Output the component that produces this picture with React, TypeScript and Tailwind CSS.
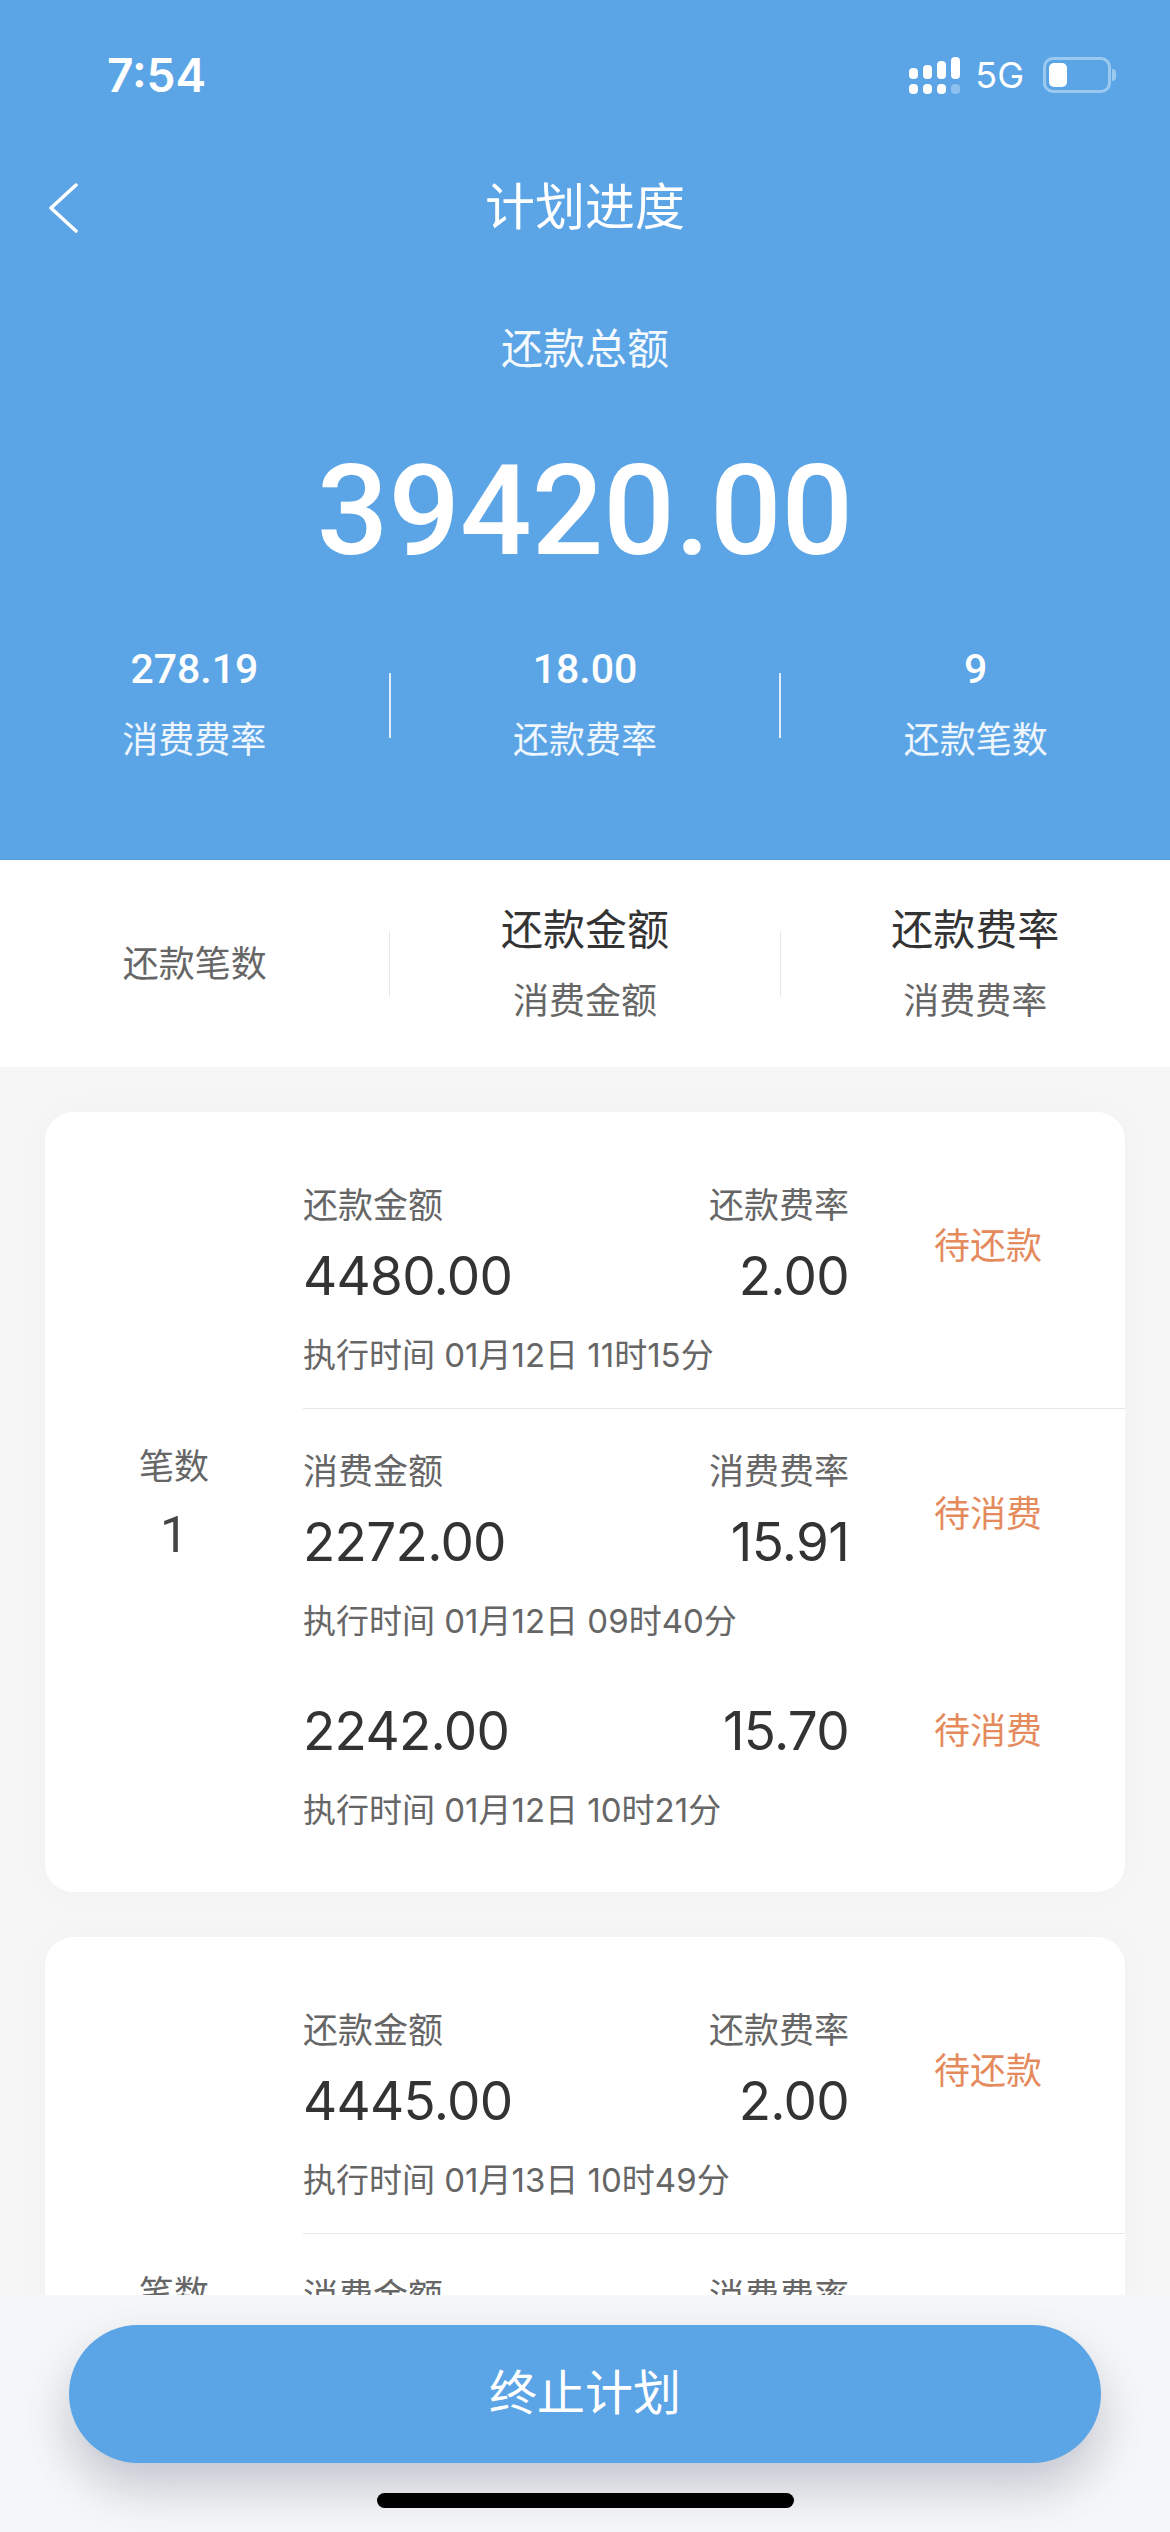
import React from 'react';

const fontStack = "font-['Roboto','Noto_Sans_CJK_SC',sans-serif]";

type Row = {
  label?: [string, string];
  amount: string;
  fee: string;
  status: string;
  time: string;
  divider?: boolean;
  pt: string;
  statusPt: string;
};

const cards: { no: string; rows: Row[]; h: string; noTop: string }[] = [
  {
    no: '1',
    h: 'h-[780px]',
    noTop: 'pt-[333px]',
    rows: [
      { label: ['还款金额', '还款费率'], amount: '4480.00', fee: '2.00', status: '待还款', time: '执行时间 01月12日 11时15分', divider: true, pt: 'pt-[72px]', statusPt: 'pt-[40px]' },
      { label: ['消费金额', '消费费率'], amount: '2272.00', fee: '15.91', status: '待消费', time: '执行时间 01月12日 09时40分', pt: 'pt-[41px]', statusPt: 'pt-[42px]' },
      { amount: '2242.00', fee: '15.70', status: '待消费', time: '执行时间 01月12日 10时21分', pt: 'pt-[53px]', statusPt: 'pt-[13px]' },
    ],
  },
  {
    no: '2',
    h: 'h-[780px]',
    noTop: 'pt-[335px]',
    rows: [
      { label: ['还款金额', '还款费率'], amount: '4445.00', fee: '2.00', status: '待还款', time: '执行时间 01月13日 10时49分', divider: true, pt: 'pt-[72px]', statusPt: 'pt-[40px]' },
      { label: ['消费金额', '消费费率'], amount: '2200.00', fee: '15.40', status: '待消费', time: '执行时间 01月13日 08时30分', pt: 'pt-[41px]', statusPt: 'pt-[42px]' },
    ],
  },
];

function StatusBar() {
  return (
    <div className="h-[150px] flex items-start justify-between pl-[107px] pr-[54px] pt-[50px]">
      <span className="text-[46px] leading-[50px] font-semibold text-white font-['Inter',sans-serif]">7:54</span>
      <div className="flex items-center gap-[14px] pt-[6px]">
        <svg width="52" height="37" viewBox="0 0 52 37" fill="#fff">
          <rect x="0" y="11" width="9" height="11" rx="4" />
          <rect x="14" y="8" width="9" height="14" rx="4" />
          <rect x="28" y="4" width="9" height="18" rx="4" />
          <rect x="42" y="0" width="9" height="22" rx="4" />
          <rect x="0" y="27" width="9" height="10" rx="4" />
          <rect x="14" y="27" width="9" height="10" rx="4" />
          <rect x="28" y="27" width="9" height="10" rx="4" />
          <rect x="42" y="27" width="9" height="10" rx="4" fillOpacity="0.3" />
        </svg>
        <span className="text-[36px] leading-[38px] text-white font-['Inter',sans-serif]">5G</span>
        <div className="flex items-center ml-[5px]">
          <div className="w-[68px] h-[36px] rounded-[10px] border-[3px] border-white/40 p-[3px]">
            <div className="w-[18px] h-full rounded-[5px] bg-white" />
          </div>
          <div className="w-[4px] h-[12px] rounded-r-full bg-white/40 ml-[1px]" />
        </div>
      </div>
    </div>
  );
}

function Stat({ value, label }: { value: string; label: string }) {
  return (
    <div className="flex-1 flex flex-col items-center">
      <span className="text-[41px] leading-[46px] font-medium text-white">{value}</span>
      <span className="mt-[26px] text-[36px] leading-[46px] text-white/90">{label}</span>
    </div>
  );
}

function PlanRow({ row }: { row: Row }) {
  return (
    <div className={row.pt}>
      <div className={row.divider ? 'flex border-b border-[#e8e8e8] pb-[31px]' : 'flex'}>
        <div className="w-[546px]">
          {row.label && (
            <div className="flex justify-between text-[35px] leading-[46px] text-[#666666] mb-[11px]">
              <span>{row.label[0]}</span>
              <span>{row.label[1]}</span>
            </div>
          )}
          <div className="flex justify-between text-[53px] leading-[70px] tracking-[-0.7px] text-[#333333] font-['Inter',sans-serif]">
            <span>{row.amount}</span>
            <span>{row.fee}</span>
          </div>
          <div className="mt-[22px] text-[33px] leading-[44px] text-[#666666] font-['Inter','Noto_Sans_CJK_SC',sans-serif]">{row.time}</div>
        </div>
        <div className={`${row.statusPt} pl-[85px] text-[36px] leading-[46px] text-[#e58a5c]`}>{row.status}</div>
      </div>
    </div>
  );
}

function CardList() {
  return cards.map((card) => (
    <div key={card.no} className={`${card.h} bg-white rounded-[28px] shadow-[0_0_40px_rgba(0,0,0,0.025)] flex`}>
      <div className={`w-[258px] flex flex-col items-center ${card.noTop}`}>
        <span className="text-[35px] leading-[46px] text-[#666666]">笔数</span>
        <span className="mt-[14px] text-[50px] leading-[60px] text-[#444444]">{card.no}</span>
      </div>
      <div className="flex-1">
        {card.rows.map((row) => (
          <PlanRow key={row.amount} row={row} />
        ))}
      </div>
    </div>
  ));
}

export default function App() {
  return (
    <div className={`relative w-[1170px] h-[2532px] overflow-hidden bg-[#f6f6f6] ${fontStack}`}>
      {/* Header */}
      <header className="h-[860px] bg-[#5ba5e6] border-b border-[#5a9ed9]">
        <StatusBar />
        <div className="relative flex justify-center">
          <svg className="absolute left-[48px] top-[33px]" width="30" height="50" viewBox="0 0 30 50" fill="none" stroke="#fff" strokeWidth="3.5" strokeLinecap="round" strokeLinejoin="round">
            <path d="M28 2 L3 25 L28 48" />
          </svg>
          <h1 className="text-[50px] leading-[56px] font-normal text-white mt-[30px]">计划进度</h1>
        </div>
        <div className="mt-[89px] text-center text-[42px] leading-[50px] text-white/95">还款总额</div>
        <div className="mt-[71px] text-center text-[126px] leading-[130px] font-medium text-white">39420.00</div>
        <div className="mt-[70px] flex items-center">
          <Stat value="278.19" label="消费费率" />
          <div className="w-[2px] h-[65px] bg-white/80" />
          <Stat value="18.00" label="还款费率" />
          <div className="w-[2px] h-[65px] bg-white/80" />
          <Stat value="9" label="还款笔数" />
        </div>
      </header>

      {/* Column titles */}
      <div className="h-[207px] bg-white flex items-center pt-[3px]">
        <div className="flex-1 text-center text-[36px] text-[#666666]">还款笔数</div>
        <div className="w-px h-[66px] bg-[#e8e8e8] -translate-y-[1px]" />
        <div className="flex-1 text-center">
          <div className="text-[42px] leading-[52px] text-[#333333]">还款金额</div>
          <div className="mt-[22px] text-[36px] leading-[46px] text-[#666666]">消费金额</div>
        </div>
        <div className="w-px h-[66px] bg-[#e8e8e8] -translate-y-[1px]" />
        <div className="flex-1 text-center">
          <div className="text-[42px] leading-[52px] text-[#333333]">还款费率</div>
          <div className="mt-[22px] text-[36px] leading-[46px] text-[#666666]">消费费率</div>
        </div>
      </div>

      {/* Plan cards */}
      <div className="px-[45px] pt-[45px] flex flex-col gap-[45px]">
        <CardList />
      </div>

      {/* Bottom action */}
      <div className="absolute left-0 right-0 bottom-0 h-[237px] bg-[#f6f7f8]">
        <button className="block mx-[69px] mt-[30px] w-[1032px] h-[138px] rounded-full bg-[#5ba5e6] text-[48px] text-white shadow-[0_24px_50px_rgba(60,70,100,0.28)]">
          终止计划
        </button>
        <div className="absolute left-[377px] top-[198px] w-[417px] h-[15px] rounded-full bg-black" />
      </div>
    </div>
  );
}
